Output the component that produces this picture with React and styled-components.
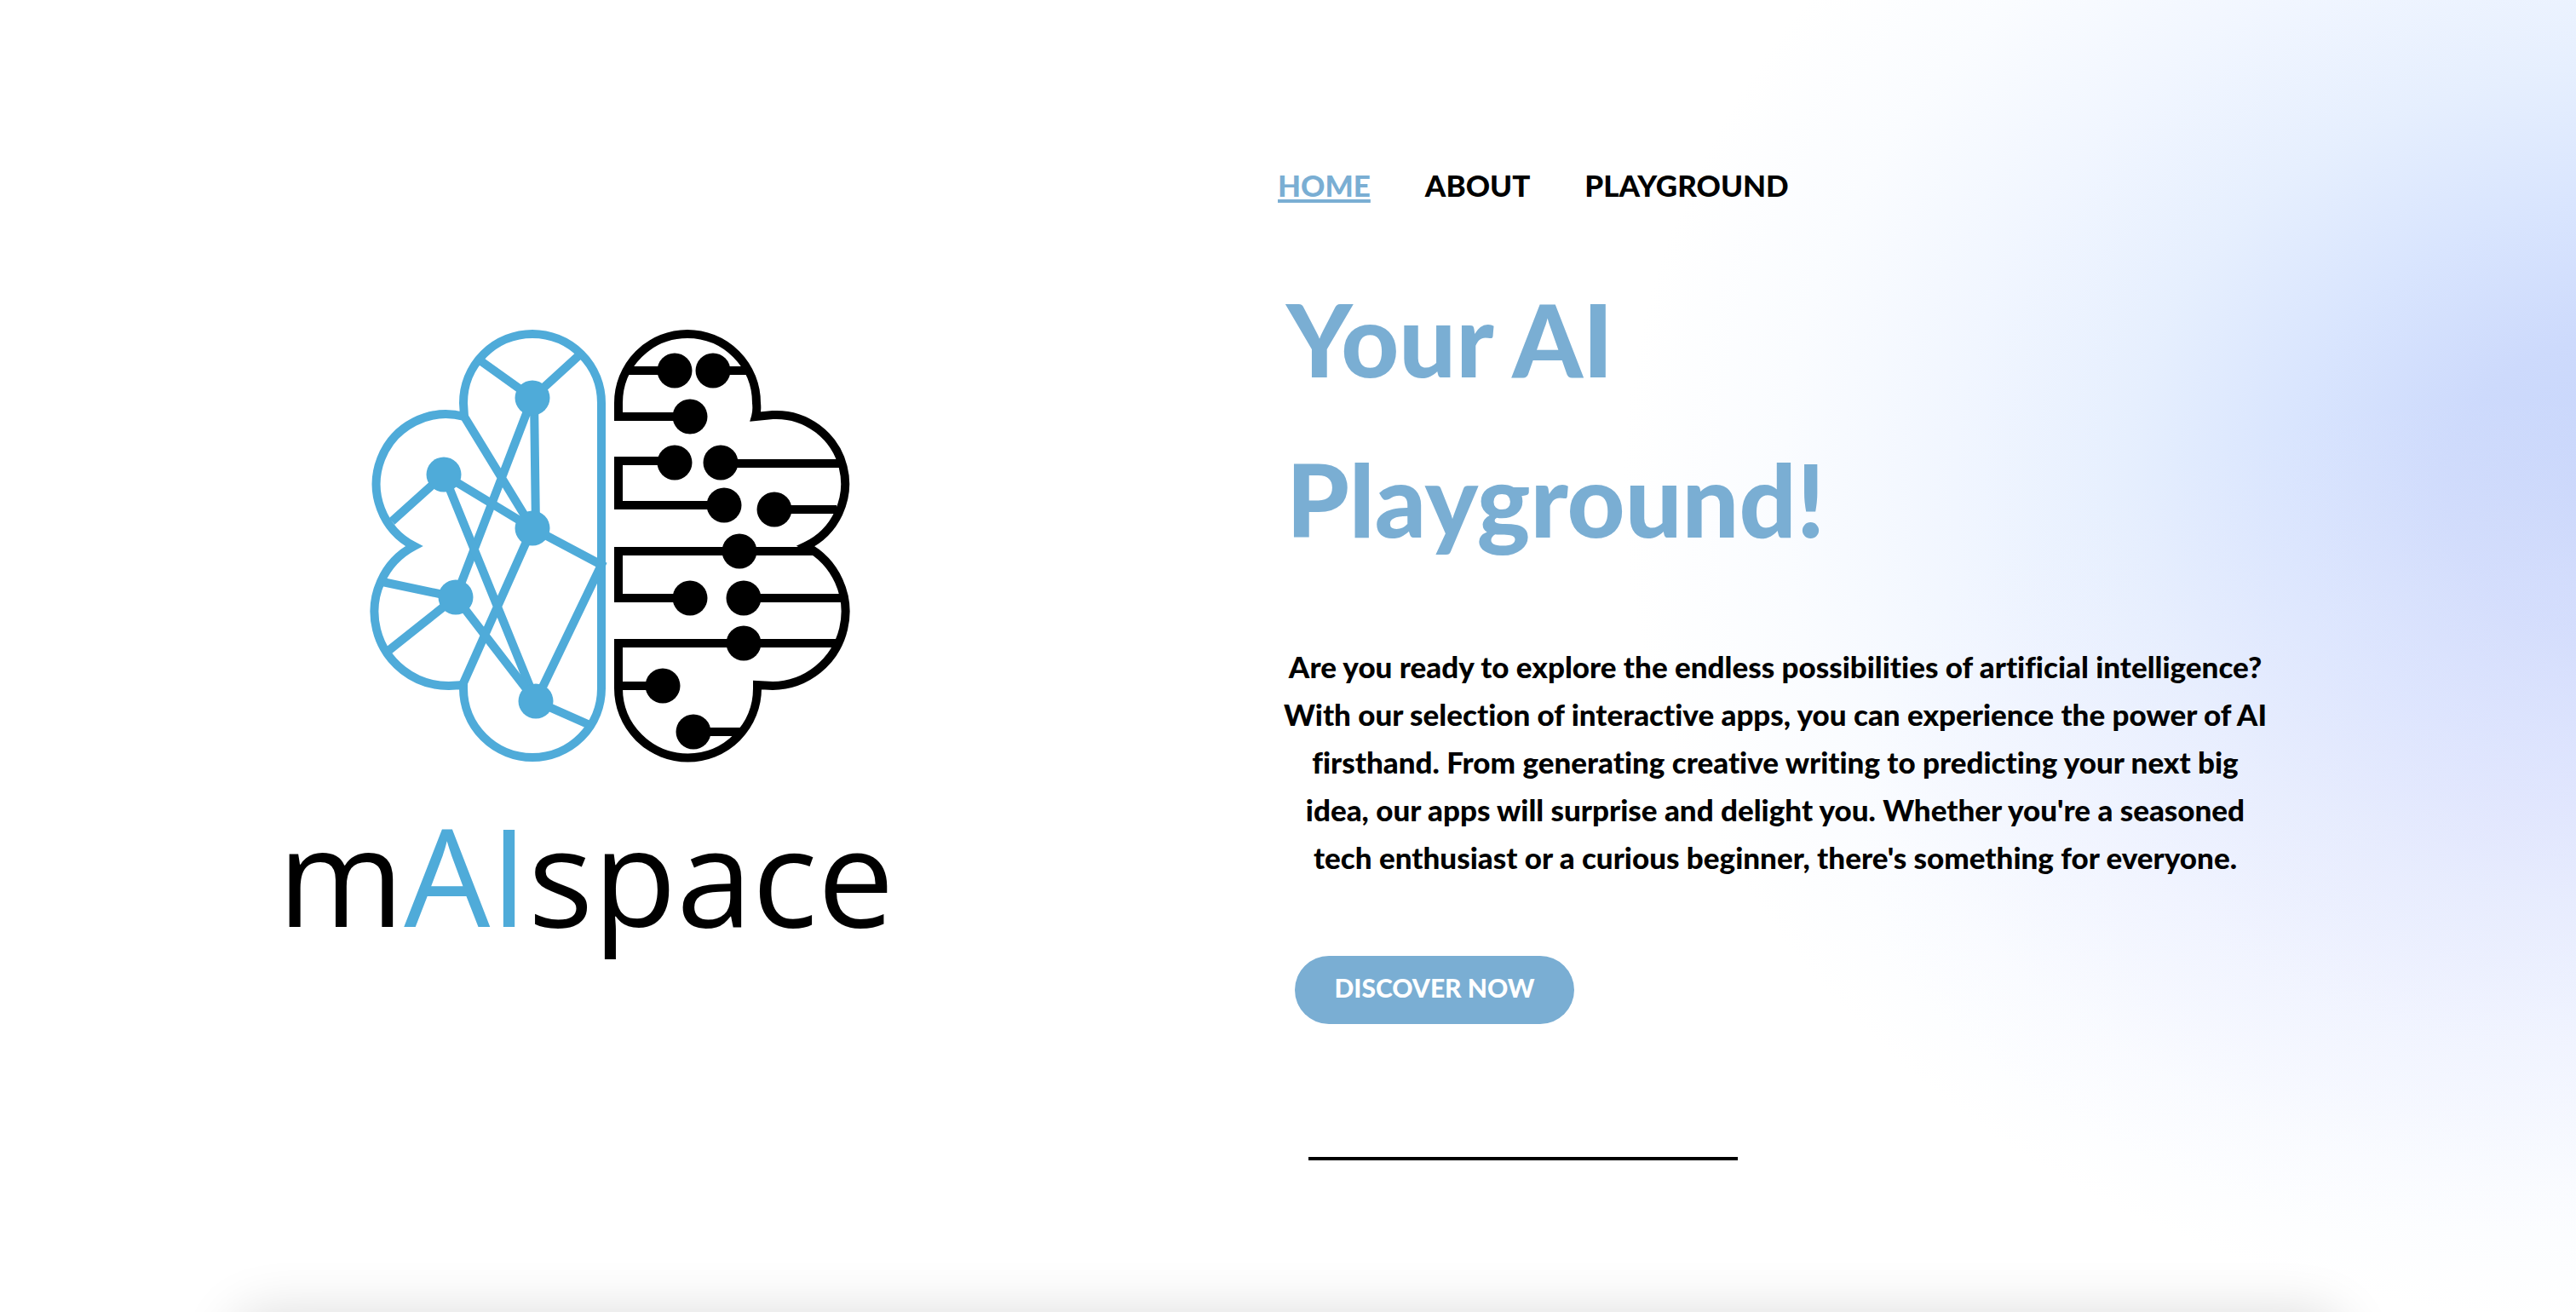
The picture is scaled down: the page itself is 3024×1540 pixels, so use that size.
import React from "react";
import styled, { createGlobalStyle } from "styled-components";

const colors = {
  accent: "#7aaed3",
  logo: "#4fabd9",
  ink: "#000000",
};

const GlobalStyle = createGlobalStyle`
  *, *::before, *::after { box-sizing: border-box; }
  body {
    margin: 0;
    background: #ffffff;
    color: ${colors.ink};
    font-family: Lato, "Liberation Sans", sans-serif;
    font-variant-ligatures: none;
  }
`;

const Page = styled.div`
  position: relative;
  min-height: 100vh;
  overflow: hidden;
  display: grid;
  grid-template-columns: minmax(0, 125fr) minmax(0, 127fr);
  align-items: start;
  background:
    radial-gradient(ellipse 26% 32% at 98% 62%, rgba(232, 226, 253, 0.35) 0%, rgba(240, 236, 254, 0.2) 55%, rgba(255, 255, 255, 0) 100%),
    radial-gradient(ellipse 39% 64% at 102% 37%, #c7d5fb 0%, #cddafc 18%, #d9e5fe 34%, #e6effe 50%, #f1f6ff 67%, #fafcff 84%, #ffffff 100%);

  /* shadow of the panel waiting below the fold */
  &::after {
    content: "";
    position: absolute;
    top: 100%;
    left: 9%;
    right: 9%;
    height: 200px;
    border-radius: 40px;
    box-shadow: 0 0 64px rgba(0, 0, 0, 0.14);
  }
`;

const Brand = styled.div`
  display: flex;
  flex-direction: column;
  align-items: flex-start;
  padding: 380px 0 0 22%;
`;

const BrainMark = styled.svg`
  display: block;
  width: 708px;
  max-width: 100%;
  height: auto;
`;

const Wordmark = styled.div`
  margin: 26px 0 0 -4px;
  font-family: "Open Sans", "Noto Sans", sans-serif;
  font-size: 160px;
  line-height: 200px;
  white-space: nowrap;
`;

const WordmarkAccent = styled.span`
  color: ${colors.logo};
`;

const Content = styled.main`
  display: flex;
  flex-direction: column;
  align-items: flex-start;
  padding-top: 192px;
`;

const Nav = styled.nav`
  display: flex;
  gap: 64px;
`;

const NavLink = styled.a`
  font-size: 35px;
  font-weight: 900;
  line-height: 50px;
  color: ${(p) => (p.$active ? colors.accent : colors.ink)};
  text-decoration: ${(p) => (p.$active ? "underline" : "none")};
  text-decoration-thickness: 4px;
  text-underline-offset: 3px;
`;

const Title = styled.h1`
  margin: 62px 0 0;
  padding-left: 10px;
  font-size: 118px;
  font-weight: 900;
  line-height: 188px;
  color: ${colors.accent};
`;

const Lead = styled.p`
  margin: 74px 0 0;
  width: 1168px;
  max-width: 100%;
  font-size: 35px;
  font-weight: 900;
  line-height: 56px;
  text-align: center;
  white-space: nowrap;
`;

const DiscoverButton = styled.button`
  margin: 88px 0 0 20px;
  width: 328px;
  height: 80px;
  padding: 0 0 6px;
  border: 0;
  border-radius: 40px;
  background: ${colors.accent};
  color: #ffffff;
  font: 900 30px/40px Lato, "Liberation Sans", sans-serif;
  cursor: pointer;
`;

const Rule = styled.hr`
  margin: 156px 0 0 36px;
  width: 504px;
  height: 4px;
  border: 0;
  background: ${colors.ink};
`;

const navItems = ["HOME", "ABOUT", "PLAYGROUND"];

const leadLines = [
  "Are you ready to explore the endless possibilities of artificial intelligence?",
  "With our selection of interactive apps, you can experience the power of AI",
  "firsthand. From generating creative writing to predicting your next big",
  "idea, our apps will surprise and delight you. Whether you're a seasoned",
  "tech enthusiast or a curious beginner, there's something for everyone.",
];

const networkNodes = [[625, 467], [521, 557], [625, 620], [535, 701], [629, 823]];

const circuitNodes = [
  [792, 435], [837, 435], [810, 489], [792, 543], [846, 543], [850, 593],
  [909, 598], [868, 647], [810, 702], [873, 702], [873, 755], [778, 805], [814, 859],
];

function Brain() {
  return (
    <BrainMark viewBox="330 380 708 520" role="img" aria-label="mAIspace logo">
      <g fill="none" stroke={colors.logo} strokeWidth="10" strokeMiterlimit="10">
        <path d="M706 473A81 81 0 0 0 544 473L545 489A82 82 0 0 0 486 641A87 87 0 0 0 527 805L544 804V808A81 81 0 0 0 706 808Z" />
        <path d="M562 422L625 467L682 415M627 467L629 620M625 467L535 701M545 489L625 620" />
        <path d="M521 557L625 620M460 612L521 557L629 823M625 620L706 663L629 823M625 620L543 804" />
        <path d="M535 701L629 823L690 850M449 683L535 701L457 763" />
      </g>
      <g fill={colors.logo}>
        {networkNodes.map(([x, y]) => (
          <circle key={`${x}-${y}`} cx={x} cy={y} r="20.5" />
        ))}
      </g>
      <g fill="none" stroke={colors.ink} strokeWidth="10" strokeMiterlimit="10">
        <path d="M810 489H726V473A81 81 0 0 1 888 473Q889 482 887 489L907 487A81 81 0 0 1 946 641A87 87 0 0 1 907 805L889 804V808A81 81 0 0 1 726 808V755H983" />
        <path d="M735 435H792M837 435H880M792 541H726V593H850M846 544H985M909 598H982" />
        <path d="M954 647H726V702H810M873 702H990M726 805H778M814 859H870" />
      </g>
      <g fill={colors.ink}>
        {circuitNodes.map(([x, y]) => (
          <circle key={`${x}-${y}`} cx={x} cy={y} r="20.5" />
        ))}
      </g>
    </BrainMark>
  );
}

export default function App() {
  return (
    <>
      <GlobalStyle />
      <Page>
        <Brand>
          <Brain />
          <Wordmark>
            m<WordmarkAccent>AI</WordmarkAccent>space
          </Wordmark>
        </Brand>
        <Content>
          <Nav>
            {navItems.map((item, i) => (
              <NavLink key={item} href={`#${item.toLowerCase()}`} $active={i === 0}>
                {item}
              </NavLink>
            ))}
          </Nav>
          <Title>
            Your AI
            <br />
            Playground!
          </Title>
          <Lead>
            {leadLines.map((line, i) => (
              <React.Fragment key={line}>
                {i > 0 && <br />}
                {line}
              </React.Fragment>
            ))}
          </Lead>
          <DiscoverButton type="button">DISCOVER NOW</DiscoverButton>
          <Rule />
        </Content>
      </Page>
    </>
  );
}
